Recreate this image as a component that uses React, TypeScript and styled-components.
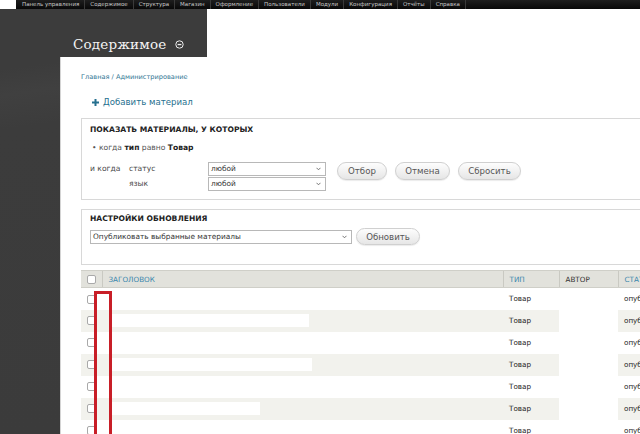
import React from "react";
import styled, { createGlobalStyle } from "styled-components";

const GlobalStyle = createGlobalStyle`
  html, body {
    margin: 0;
    padding: 0;
    background: #fff;
    overflow: hidden;
  }
  * {
    box-sizing: border-box;
  }
`;

const Page = styled.div`
  width: 640px;
  height: 434px;
  overflow: hidden;
  display: flex;
  flex-direction: column;
  font-family: "DejaVu Sans", Verdana, sans-serif;
  color: #333;
`;

const Toolbar = styled.div`
  height: 9px;
  margin-left: 16px;
  background: linear-gradient(#1e1e1e, #080808);
  display: flex;
  align-items: center;
  padding-left: 1px;
  flex-shrink: 0;
`;

const ToolItem = styled.span`
  font-size: 5.5px;
  color: #c8c8c8;
  padding: 0 5px;
  line-height: 9px;
  border-right: 1px solid #3a3a3a;
  white-space: nowrap;
`;

const Body = styled.div`
  flex: 1;
  display: flex;
  min-height: 0;
`;

const Sidebar = styled.div`
  width: 60px;
  flex-shrink: 0;
  background: linear-gradient(172deg, #3c3c3c 0%, #3c3c3c 14%, #404040 20%, #3c3c3c 28%, #3b3b3b 100%);
`;

const Main = styled.div`
  flex: 1;
  display: flex;
  flex-direction: column;
  min-width: 0;
`;

const HeaderRow = styled.div`
  height: 48px;
  display: flex;
  flex-shrink: 0;
`;

const DarkHeader = styled.div`
  width: 147px;
  background: #3c3c3c;
  display: flex;
  align-items: flex-end;
  padding: 0 0 5px 13px;
`;

const PageTitle = styled.h1`
  margin: 0;
  font-family: "DejaVu Serif", Georgia, serif;
  font-weight: normal;
  font-size: 13.5px;
  letter-spacing: 0.2px;
  color: #f4f4f4;
  display: flex;
  align-items: center;
  gap: 9px;
`;

const Content = styled.div`
  flex: 1;
  background: #fff;
  border-left: 1px solid #d4d4d4;
  padding: 15px 0 0 20px;
  width: 640px;
`;

const Breadcrumb = styled.div`
  font-size: 6.6px;
  color: #2f7593;
  line-height: 10px;
`;

const AddLink = styled.div`
  margin: 15px 0 0 11px;
  font-size: 8.6px;
  color: #26708f;
  display: flex;
  align-items: center;
  gap: 4px;
  line-height: 10px;
`;

const Fieldset = styled.div<{ $h: number; $gap: number }>`
  margin-top: ${(p) => p.$gap}px;
  height: ${(p) => p.$h}px;
  width: 640px;
  border: 1px solid #d8d8d8;
  border-right: none;
  padding: 6px 0 0 8px;
`;

const Legend = styled.div<{ $top?: number }>`
  margin-top: ${(p) => p.$top ?? 0}px;
  font-size: 7.6px;
  font-weight: bold;
  color: #222;
  line-height: 10px;
`;

const Condition = styled.div`
  margin: 8px 0 0 2px;
  font-size: 7.6px;
  color: #555;
  line-height: 10px;
  b {
    color: #222;
  }
`;

const FilterGrid = styled.div`
  margin-top: 8px;
  display: grid;
  grid-template-columns: 39px 79px 118px auto;
  grid-template-rows: 15px 15px;
  align-items: center;
  font-size: 7.6px;
  color: #4a4a4a;
`;

const Buttons = styled.div`
  grid-column: 4;
  grid-row: 1 / span 2;
  align-self: start;
  margin: 1px 0 0 11px;
  display: flex;
  gap: 8px;
`;

const SelectBox = styled.div<{ $w: number }>`
  width: ${(p) => p.$w}px;
  height: 14px;
  border: 1px solid #b8b8b8;
  background: #fff;
  display: flex;
  align-items: center;
  justify-content: space-between;
  padding: 0 4px 0 2px;
  font-size: 7.4px;
  color: #333;
`;

const Button = styled.div<{ $w: number; $h?: number }>`
  width: ${(p) => p.$w}px;
  height: ${(p) => p.$h ?? 18}px;
  border: 1px solid #d0d0d0;
  border-radius: 9px;
  background: linear-gradient(#fdfdfd, #e6e6e6);
  box-shadow: 0 1px 1px rgba(0, 0, 0, 0.08);
  display: flex;
  align-items: center;
  justify-content: center;
  font-size: 8.6px;
  color: #555;
`;

const UpdateRow = styled.div`
  margin-top: 4px;
  display: flex;
  align-items: center;
  gap: 4px;
`;

const TableWrap = styled.div`
  position: relative;
  margin-top: 5px;
  width: 640px;
`;

const Table = styled.table`
  border-collapse: collapse;
  table-layout: fixed;
  width: 600px;
  font-size: 7.2px;
`;

const Th = styled.th<{ $link?: boolean }>`
  height: 17px;
  background: #e2e2dc;
  border-top: 1px solid #cfcfc8;
  border-bottom: 1px solid #cfcfc8;
  border-left: 1px solid #c9c9c2;
  text-align: left;
  font-weight: normal;
  padding: 0 0 0 6px;
  color: ${(p) => (p.$link ? "#3a87ad" : "#333")};
  &:first-child {
    border-left: none;
  }
`;

const Tr = styled.tr<{ $odd: boolean }>`
  height: 22px;
  background: ${(p) => (p.$odd ? "#f2f2ed" : "#fff")};
`;

const Td = styled.td<{ $blank?: boolean }>`
  padding: 0 0 0 6px;
  color: #222;
  white-space: nowrap;
  overflow: hidden;
  background: ${(p) => (p.$blank ? "#fff" : "transparent")};
`;

const TitleCell = styled.td`
  padding: 0 0 0 7px;
`;

const Redacted = styled.div<{ $w: number }>`
  width: ${(p) => p.$w}px;
  height: 13px;
  background: #fff;
`;

const Check = styled.span`
  display: inline-block;
  width: 9px;
  height: 9px;
  border: 1px solid #a9a9a9;
  border-radius: 2px;
  background: #fff;
  vertical-align: middle;
`;

const Marker = styled.div`
  position: absolute;
  left: 13px;
  top: 21px;
  width: 18px;
  height: 200px;
  border: 3px solid #c81e27;
`;

const Chevron = () => (
  <svg width="5" height="4" viewBox="0 0 5 4">
    <path d="M0.5 0.8 L2.5 2.8 L4.5 0.8" fill="none" stroke="#666" strokeWidth="0.9" />
  </svg>
);

const menu = [
  "Панель управления",
  "Содержимое",
  "Структура",
  "Магазин",
  "Оформление",
  "Пользователи",
  "Модули",
  "Конфигурация",
  "Отчёты",
  "Справка",
];

// widths of the blanked-out titles, 0 where the row is empty
const rows = [0, 200, 0, 203, 0, 151, 0];

export default function App() {
  return (
    <>
      <GlobalStyle />
      <Page>
        <Toolbar>
          {menu.map((m) => (
            <ToolItem key={m}>{m}</ToolItem>
          ))}
        </Toolbar>
        <Body>
          <Sidebar />
          <Main>
            <HeaderRow>
              <DarkHeader>
                <PageTitle>
                  Содержимое
                  <svg width="9" height="9" viewBox="0 0 9 9">
                    <circle cx="4.5" cy="4.5" r="3.7" fill="none" stroke="#eee" strokeWidth="1" />
                    <rect x="2.6" y="3.9" width="3.8" height="1.3" fill="#eee" />
                  </svg>
                </PageTitle>
              </DarkHeader>
            </HeaderRow>
            <Content>
              <Breadcrumb>Главная / Администрирование</Breadcrumb>
              <AddLink>
                <svg width="7" height="7" viewBox="0 0 7 7">
                  <path d="M2.5 0h2v2.5H7v2H4.5V7h-2V4.5H0v-2h2.5z" fill="#26708f" />
                </svg>
                Добавить материал
              </AddLink>

              <Fieldset $h={82} $gap={11}>
                <Legend>ПОКАЗАТЬ МАТЕРИАЛЫ, У КОТОРЫХ</Legend>
                <Condition>
                  • когда <b>тип</b> равно <b>Товар</b>
                </Condition>
                <FilterGrid>
                  <span>и когда</span>
                  <span>статус</span>
                  <SelectBox $w={118}>
                    любой <Chevron />
                  </SelectBox>
                  <Buttons>
                    <Button $w={50}>Отбор</Button>
                    <Button $w={55}>Отмена</Button>
                    <Button $w={63}>Сбросить</Button>
                  </Buttons>
                  <span />
                  <span>язык</span>
                  <SelectBox $w={118}>
                    любой <Chevron />
                  </SelectBox>
                </FilterGrid>
              </Fieldset>

              <Fieldset $h={56} $gap={9}>
                <Legend $top={-2}>НАСТРОЙКИ ОБНОВЛЕНИЯ</Legend>
                <UpdateRow>
                  <SelectBox $w={262}>
                    Опубликовать выбранные материалы <Chevron />
                  </SelectBox>
                  <Button $w={64} $h={17}>
                    Обновить
                  </Button>
                </UpdateRow>
              </Fieldset>

              <TableWrap>
                <Table>
                  <colgroup>
                    <col style={{ width: 21 }} />
                    <col style={{ width: 401 }} />
                    <col style={{ width: 56 }} />
                    <col style={{ width: 59 }} />
                    <col style={{ width: 63 }} />
                  </colgroup>
                  <thead>
                    <tr>
                      <Th>
                        <Check />
                      </Th>
                      <Th $link>ЗАГОЛОВОК</Th>
                      <Th $link>ТИП</Th>
                      <Th>АВТОР</Th>
                      <Th $link>СТАТУС</Th>
                    </tr>
                  </thead>
                  <tbody>
                    {rows.map((w, i) => (
                      <Tr key={i} $odd={i % 2 === 1}>
                        <Td>
                          <Check />
                        </Td>
                        <TitleCell>{w > 0 ? <Redacted $w={w} /> : null}</TitleCell>
                        <Td>Товар</Td>
                        <Td $blank />
                        <Td>опубликовано</Td>
                      </Tr>
                    ))}
                  </tbody>
                </Table>
                <Marker />
              </TableWrap>
            </Content>
          </Main>
        </Body>
      </Page>
    </>
  );
}
